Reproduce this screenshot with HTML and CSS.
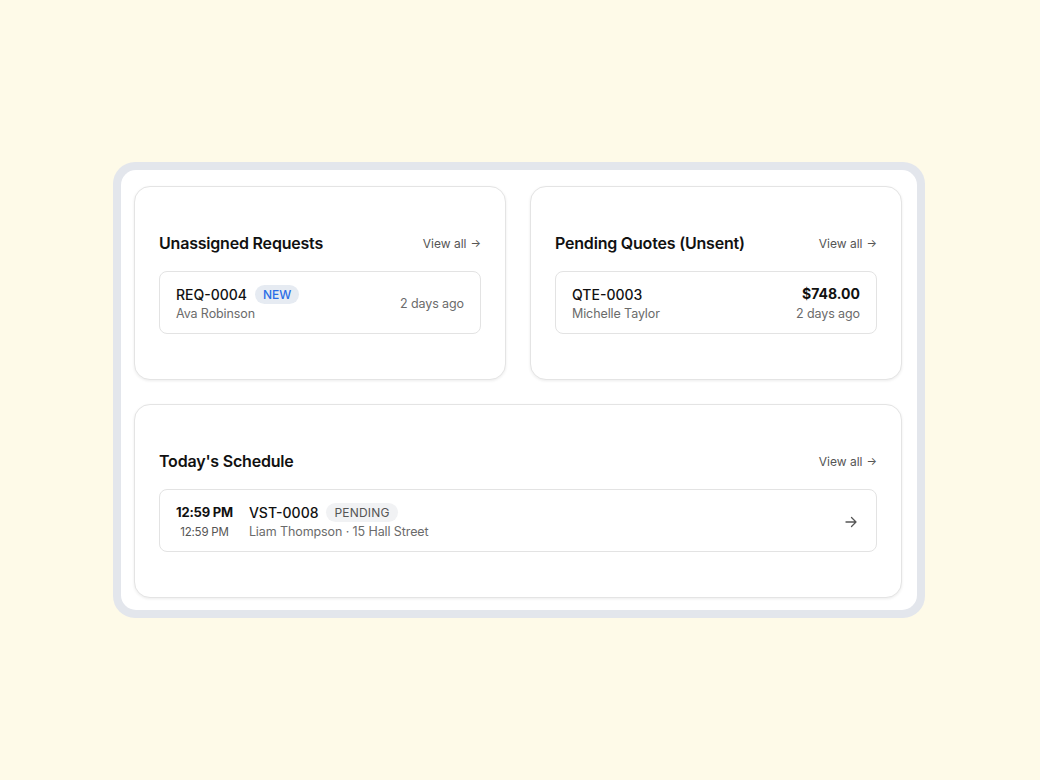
FILE: index.html
```html
<!DOCTYPE html>
<html>
<head>
<meta charset="utf-8">
<link rel="stylesheet" href="styles.css">
</head>
<body>
<div class="frame">
  <div class="panel">
    <div class="top-row">
      <section class="card">
        <div class="card-head">
          <h2 class="card-title">Unassigned Requests</h2>
          <a class="view-all">View all <span class="arr">→</span></a>
        </div>
        <div class="item">
          <div class="item-main">
            <div class="line1"><span class="code">REQ-0004</span><span class="badge badge-new">NEW</span></div>
            <div class="sub">Ava Robinson</div>
          </div>
          <div class="item-side"><div class="sub">2 days ago</div></div>
        </div>
      </section>
      <section class="card">
        <div class="card-head">
          <h2 class="card-title">Pending Quotes (Unsent)</h2>
          <a class="view-all">View all <span class="arr">→</span></a>
        </div>
        <div class="item">
          <div class="item-main">
            <div class="line1"><span class="code">QTE-0003</span></div>
            <div class="sub">Michelle Taylor</div>
          </div>
          <div class="item-side">
            <div class="amount">$748.00</div>
            <div class="sub">2 days ago</div>
          </div>
        </div>
      </section>
    </div>
    <section class="card">
      <div class="card-head">
        <h2 class="card-title">Today's Schedule</h2>
        <a class="view-all">View all <span class="arr">→</span></a>
      </div>
      <div class="item">
        <div class="time">
          <div class="time-main">12:59 PM</div>
          <div class="time-sub">12:59 PM</div>
        </div>
        <div class="item-main">
          <div class="line1"><span class="code">VST-0008</span><span class="badge badge-pending">PENDING</span></div>
          <div class="sub">Liam Thompson · 15 Hall Street</div>
        </div>
        <svg class="go" width="14" height="14" viewBox="0 0 14 14" fill="none" stroke="#555" stroke-width="1.3" stroke-linecap="round" stroke-linejoin="round"><path d="M2 7h10M7.5 2.5L12 7l-4.5 4.5"/></svg>
      </div>
    </section>
  </div>
</div>
</body>
</html>
```
FILE: styles.css
```css
* { box-sizing: border-box; }
html, body { margin: 0; padding: 0; }
body {
  background: #fefae8;
  font-family: "Inter", "Lato", sans-serif;
  color: #111;
  width: 1040px;
  height: 780px;
  padding-top: 162px;
  padding-left: 113px;
}
.frame {
  width: 812px;
  height: 456px;
  background: #e3e6ec;
  border-radius: 22px;
  padding: 8px;
}
.panel {
  background: #fff;
  border-radius: 15px;
  height: 100%;
  padding: 16px 15px 11px 13px;
  display: flex;
  flex-direction: column;
  gap: 24px;
}
.top-row {
  display: grid;
  grid-template-columns: 1fr 1fr;
  gap: 24px;
}
.card {
  border: 1px solid #e4e4e4;
  border-radius: 16px;
  background: #fff;
  box-shadow: 0 1px 3px rgba(0,0,0,0.08);
  padding: 44px 24px 45px;
  height: 194px;
}
.card-head {
  display: flex;
  justify-content: space-between;
  align-items: center;
  height: 24px;
  margin-bottom: 16px;
}
.card-title {
  margin: 0;
  font-size: 16px;
  font-weight: 600;
  letter-spacing: -0.2px;
  color: #111;
}
.view-all {
  font-size: 12px;
  color: #555;
  display: flex;
  align-items: center;
  gap: 4px;
}
.arr { font-size: 11px; }
.item {
  border: 1px solid #e3e3e3;
  border-radius: 8px;
  height: 63px;
  padding: 2px 16px 0;
  display: flex;
  align-items: center;
  gap: 16px;
}
.item-main { flex: 1; display: flex; flex-direction: column; gap: 1px; }
.line1 { display: flex; align-items: center; gap: 8px; height: 20px; }
.code { font-size: 14px; font-weight: 500; color: #111; }
.badge {
  font-size: 12px;
  border-radius: 10px;
  padding: 2px 8px;
  line-height: 15px;
}
.badge-new { background: #e6ebf2; color: #2a6de6; font-weight: 500; }
.badge-pending { background: #f1f2f4; color: #555; letter-spacing: 0.2px; }
.sub { font-size: 12.5px; color: #6b6b6b; line-height: 18px; letter-spacing: -0.1px; }
.item-side { display: flex; flex-direction: column; align-items: flex-end; gap: 1px; }
.amount { font-size: 14px; font-weight: 700; line-height: 20px; }
.time { display: flex; flex-direction: column; align-items: center; gap: 1px; }
.time-main { font-size: 13px; font-weight: 700; line-height: 20px; letter-spacing: -0.2px; }
.time-sub { font-size: 11.5px; color: #555; line-height: 18px; letter-spacing: -0.2px; }
.go { margin-right: 2px; }
```
